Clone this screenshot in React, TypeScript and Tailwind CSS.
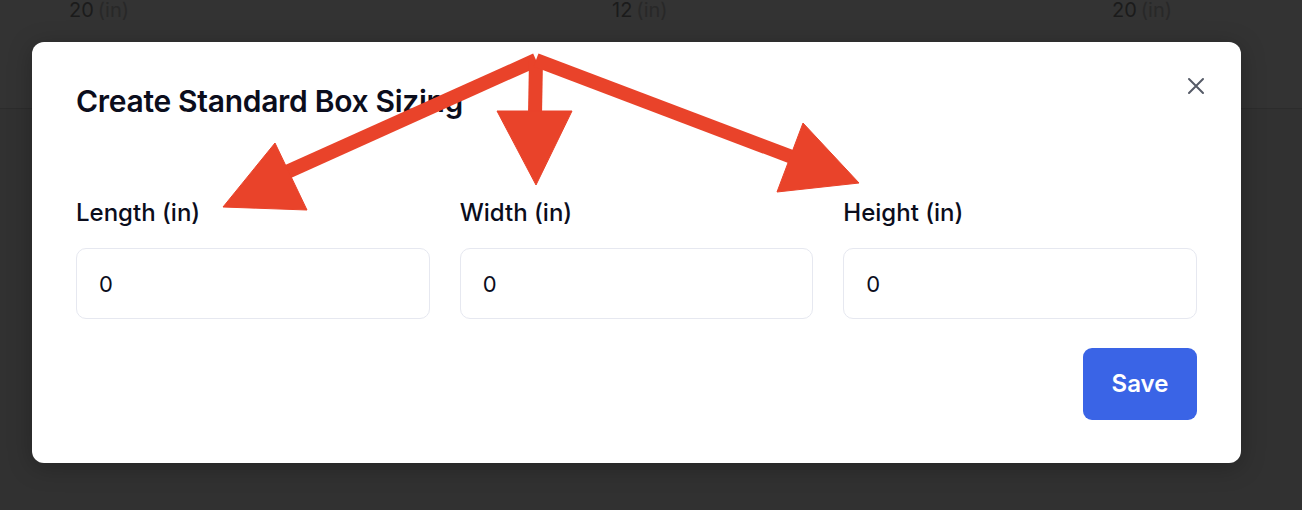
import { useState } from "react";

type Field = {
  key: string;
  label: string;
};

const fields: Field[] = [
  { key: "length", label: "Length (in)" },
  { key: "width", label: "Width (in)" },
  { key: "height", label: "Height (in)" },
];

const behind = [
  { value: "20", pad: "left-[69px]" },
  { value: "12", pad: "left-[612px]" },
  { value: "20", pad: "left-[1112px]" },
];

const Arrows = () => (
  <svg
    className="pointer-events-none absolute inset-0 z-20"
    width="1302"
    height="510"
    viewBox="0 0 1302 510"
  >
    <g fill="#e9432a" stroke="#e9432a" strokeLinejoin="round">
      <line x1="536" y1="60" x2="287" y2="172" strokeWidth="14" />
      <line x1="536" y1="60" x2="535" y2="114" strokeWidth="14" />
      <line x1="536" y1="60" x2="792" y2="157" strokeWidth="14" />
      <polygon points="275,143 223,207 307,210" strokeWidth="1" />
      <polygon points="497,111 572,111 536,185" strokeWidth="1" />
      <polygon points="803,123 859,183 777,192" strokeWidth="1" />
    </g>
  </svg>
);

export default function App() {
  const [values, setValues] = useState<Record<string, string>>({
    length: "0",
    width: "0",
    height: "0",
  });

  return (
    <div
      className="relative h-[510px] w-[1302px] overflow-hidden bg-[#313131]"
      style={{ fontFamily: "Inter, 'Noto Sans', sans-serif" }}
    >
      {/* page behind the overlay */}
      <div className="relative h-[109px] border-b border-[#2c2c2c] bg-[#333333]">
        {behind.map((b, i) => (
          <div
            key={i}
            className={`${b.pad} absolute top-0 text-[20px] leading-5 text-[#1b1b1b]`}
          >
            {b.value}
            <span className="ml-1 text-[#282828]">(in)</span>
          </div>
        ))}
      </div>

      {/* modal */}
      <div className="absolute left-[32px] top-[42px] z-10 w-[1209px] rounded-xl bg-white px-[44px] pb-[43px] pt-[41px] shadow-[0_4px_24px_rgba(0,0,0,0.25)]">
        <button className="absolute right-[36px] top-[35px] flex h-[18px] w-[18px] items-center justify-center text-[#565b67]">
          <svg width="18" height="18" viewBox="0 0 18 18" fill="none">
            <path
              d="M2 2L16 16M16 2L2 16"
              stroke="currentColor"
              strokeWidth="2"
              strokeLinecap="round"
            />
          </svg>
        </button>
        <h2 className="text-[30px] font-semibold leading-9 tracking-[-0.3px] text-[#0b0d1c]">
          Create Standard Box Sizing
        </h2>
        <div className="mt-[78px] grid grid-cols-3 gap-[30px]">
          {fields.map((f) => (
            <div key={f.key} className="flex flex-col">
              <label className="text-[24px] font-medium leading-8 text-[#0b0d1c]">
                {f.label}
              </label>
              <input
                type="text"
                value={values[f.key]}
                onChange={(e) =>
                  setValues({ ...values, [f.key]: e.target.value })
                }
                className="mt-[19px] h-[71px] w-full rounded-[10px] border border-[#e6e8f0] px-[22px] text-[22px] text-[#0b0d1c] outline-none"
              />
            </div>
          ))}
        </div>
        <div className="mt-[29px] flex justify-end">
          <button className="h-[72px] w-[114px] rounded-[9px] bg-[#3a64e6] text-[24px] font-semibold text-white">
            Save
          </button>
        </div>
      </div>

      <Arrows />
    </div>
  );
}
